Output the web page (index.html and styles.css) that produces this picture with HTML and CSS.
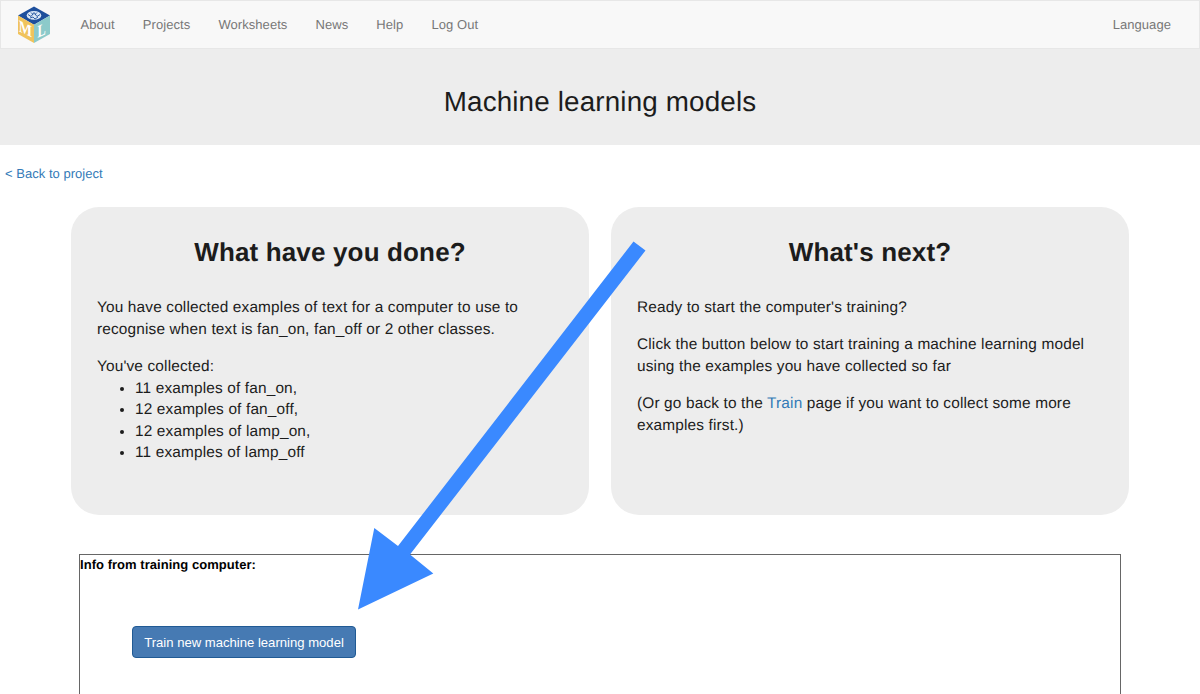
FILE: index.html
```
<!DOCTYPE html>
<html lang="en">
<head>
<meta charset="utf-8">
<title>Machine learning models</title>
<link rel="stylesheet" href="styles.css">
</head>
<body>
<nav class="navbar">
  <a class="brand" href="#"><svg width="34" height="38" viewBox="0 0 34 38">
    <path fill="#1d4f9c" d="M17 .5 33 9.5 17 18.8 1 9.5Z"/>
    <path fill="#f0c35c" d="M1 9.5 17 18.8V37L1 28Z"/>
    <path fill="#8ccaca" d="M33 9.5 17 18.8V37L33 28Z"/>
    <ellipse cx="17" cy="9.4" rx="7.3" ry="4.3" fill="#d9e6f5"/>
    <path d="M11 8.5l3 2 3-4 3 4 3-2M13 12l3-1 2 2 3-2M14 6.5l2 2M20 6.5l-2 2" fill="none" stroke="#1d4f9c" stroke-width=".9"/>
    <text class="logo-letter" transform="matrix(1.08 .5 0 1.3 1.8 25.2)">M</text>
    <text class="logo-letter" transform="matrix(.95 -.42 0 1.35 20.4 31.8)">L</text>
  </svg></a>
  <a href="#">About</a><a href="#">Projects</a><a href="#">Worksheets</a><a href="#">News</a><a href="#">Help</a><a href="#">Log Out</a>
  <a class="language" href="#">Language</a>
</nav>
<header class="title-bar"><h1>Machine learning models</h1></header>
<div class="back"><a href="#">&lt; Back to project</a></div>
<main>
  <div class="cards">
    <section class="card">
      <h2>What have you done?</h2>
      <p>You have collected examples of text for a computer to use to<br>recognise when text is fan_on, fan_off or 2 other classes.</p>
      <div>You've collected:</div>
      <ul><li>11 examples of fan_on,</li><li>12 examples of fan_off,</li><li>12 examples of lamp_on,</li><li>11 examples of lamp_off</li></ul>
    </section>
    <section class="card">
      <h2>What's next?</h2>
      <p>Ready to start the computer's training?</p>
      <p>Click the button below to start training a machine learning model<br>using the examples you have collected so far</p>
      <p>(Or go back to the <a href="#">Train</a> page if you want to collect some more<br>examples first.)</p>
    </section>
  </div>
  <section class="training">
    <div class="training-title">Info from training computer:</div>
    <button class="train-button">Train new machine learning model</button>
  </section>
</main>
<svg class="arrow" width="1200" height="694" viewBox="0 0 1200 694"><path fill="#3a89ff" d="M633.5 241.5 645.5 250.5 410 554.5 433.3 573.5 358 609.5 374.3 528 398 546Z"/></svg>
</body>
</html>
```
FILE: styles.css
```
* { box-sizing: border-box; }
body {
  margin: 0;
  height: 694px;
  overflow: hidden;
  position: relative;
  background: #fff;
  color: #1c1c1c;
  font: 15.4px/21.6px "Liberation Sans", Arial, sans-serif;
  letter-spacing: .01em;
  text-rendering: geometricPrecision;
}
a { color: #337ab7; text-decoration: none; }
.navbar {
  display: flex;
  align-items: center;
  gap: 28.1px;
  height: 49px;
  padding: 0 28px 0 16px;
  background: #f8f8f8;
  border: 1px solid #e7e7e7;
  font-size: 13px;
  letter-spacing: .06px;
}
.navbar a { color: #777; }
.navbar .brand { display: flex; margin-right: 1.4px; }
.navbar .language { margin-left: auto; }
.logo-letter { fill: #fff; font: bold 13px "Liberation Serif", serif; letter-spacing: 0; }
.title-bar { height: 96px; padding-top: 37px; background: #ededed; text-align: center; }
h1 { margin: 0; font-size: 27.8px; line-height: 31px; font-weight: 400; }
.back { height: 62px; padding: 18px 5px; font-size: 13px; letter-spacing: .03px; }
main { padding: 0 71px; }
.cards { display: grid; grid-template-columns: 518px 518px; gap: 22px; }
.card { height: 307.5px; padding: 29px 26px; border-radius: 28px; background: #ededed; }
h2 { margin: 0 0 29.4px; font-size: 26px; line-height: 32px; text-align: center; }
p { margin: 0 0 15.4px; }
ul { margin: 0; padding-left: 38px; }
.training { height: 160px; margin: 39.5px 8px 0; border: 1px solid #666; }
.training-title { color: #000; font-size: 13px; font-weight: 700; line-height: 20px; letter-spacing: .04px; }
.train-button {
  display: block;
  width: 224px;
  height: 32px;
  margin: 51px 0 0 52px;
  padding: 0;
  border: 1px solid #205a94;
  border-radius: 4px;
  background: #467ab3;
  color: #fff;
  font: 13.1px "Liberation Sans", Arial, sans-serif;
}
.arrow { position: absolute; left: 0; top: 0; pointer-events: none; }
```
